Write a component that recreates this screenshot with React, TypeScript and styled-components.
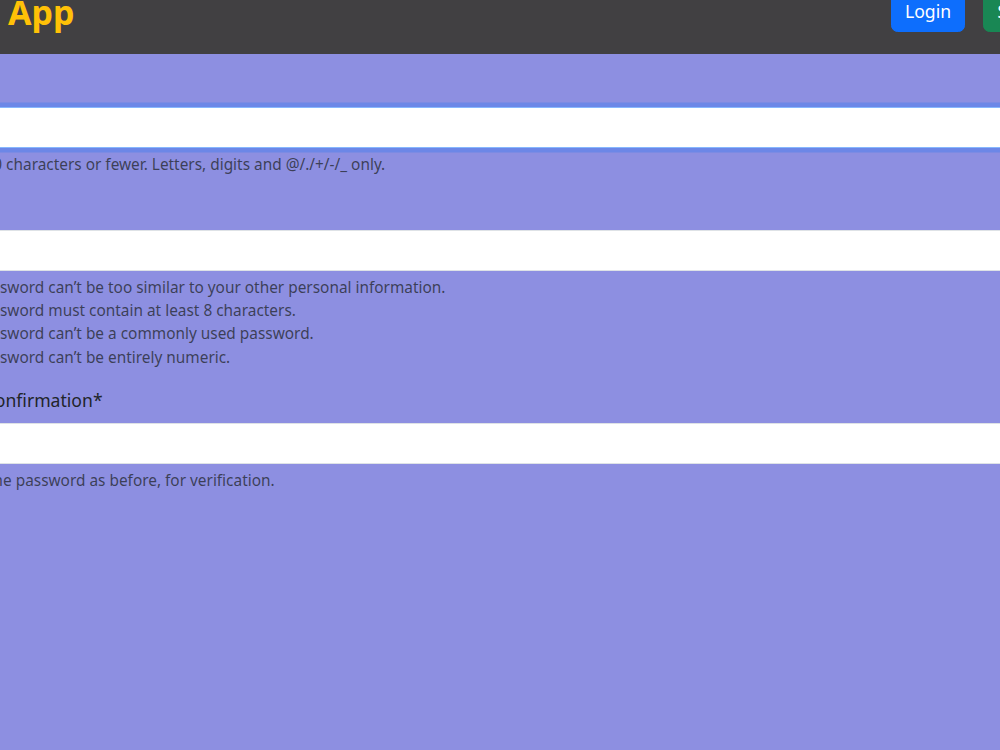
import React from 'react';
import styled, { createGlobalStyle, css } from 'styled-components';

const GlobalStyle = createGlobalStyle`
    html, body {
        margin: 0;
        padding: 0;
        overflow: hidden;
        background: #8d8fe1;
    }
    body {
        font-family: "Noto Sans", "DejaVu Sans", sans-serif;
        font-size: 17.6px;
        line-height: 1.5;
        color: #212529;
    }
`;

// the page is shown scrolled a little to the right and down
const Page = styled.div`
    width: 1197px;
    min-height: 800px;
    margin: -21px 0 0 -108px;
    background: #8d8fe1;
`;

const Navbar = styled.header`
    display: flex;
    align-items: flex-start;
    box-sizing: border-box;
    height: 75px;
    padding: 11px 13.2px 0 116px;
    background: #414042;
`;

const Brand = styled.a`
    font-size: 34px;
    font-weight: 700;
    line-height: 44px;
    color: #ffc107;
    text-decoration: none;
`;

const Actions = styled.div`
    display: flex;
    gap: 18px;
    margin-left: auto;
`;

const NavButton = styled.button<{ $variant: 'primary' | 'success' }>`
    font-family: inherit;
    font-size: 17.6px;
    line-height: 1.5;
    padding: 6.6px 13.2px 7.2px;
    border: 1.1px solid;
    border-radius: 6.6px;
    color: #fff;
    ${({ $variant }) =>
        $variant === 'primary'
            ? css`
                  background: #0d6efd;
                  border-color: #0d6efd;
              `
            : css`
                  background: #198754;
                  border-color: #198754;
              `}
`;

const Main = styled.main`
    padding: 17.6px 13.2px 0 10.2px;
`;

const Field = styled.div`
    margin-bottom: 18.6px;
`;

const Label = styled.label`
    display: block;
    margin-bottom: 8.8px;
    font-size: 17.6px;
    line-height: 26.4px;
`;

const Input = styled.input<{ $focused?: boolean }>`
    display: block;
    box-sizing: border-box;
    width: 100%;
    padding: 6.6px 13.2px;
    font-family: inherit;
    font-size: 17.6px;
    line-height: 1.5;
    color: #212529;
    background: #fff;
    border: 1.1px solid #dee2e6;
    border-radius: 6.6px;
    outline: 0;
    ${({ $focused }) =>
        $focused &&
        css`
            border-color: #86b7fe;
            box-shadow: 0 0 0 4.4px rgba(13, 110, 253, 0.25);
        `}
`;

const HelpText = styled.div`
    margin-top: 4.4px;
    font-size: 15.4px;
    line-height: 1.5;
    color: rgba(33, 37, 41, 0.75);
`;

const HelpList = styled.ul`
    margin: 0;
    padding-left: 35.2px;
    line-height: 23.3px;
`;

const passwordRules = [
    'Your password can’t be too similar to your other personal information.',
    'Your password must contain at least 8 characters.',
    'Your password can’t be a commonly used password.',
    'Your password can’t be entirely numeric.',
];

const App: React.FC = (): JSX.Element => {
    return (
        <Page>
            <GlobalStyle />
            <Navbar>
                <Brand href="#">App</Brand>
                <Actions>
                    <NavButton $variant="primary">Login</NavButton>
                    <NavButton $variant="success">Sign Up</NavButton>
                </Actions>
            </Navbar>
            <Main>
                <form onSubmit={(event) => event.preventDefault()}>
                    <Field>
                        <Label htmlFor="id_username">Username*</Label>
                        <Input id="id_username" type="text" $focused />
                        <HelpText>
                            Required. 150 characters or fewer. Letters, digits
                            and @/./+/-/_ only.
                        </HelpText>
                    </Field>
                    <Field>
                        <Label htmlFor="id_password1">Password*</Label>
                        <Input id="id_password1" type="password" />
                        <HelpText>
                            <HelpList>
                                {passwordRules.map((rule) => (
                                    <li key={rule}>{rule}</li>
                                ))}
                            </HelpList>
                        </HelpText>
                    </Field>
                    <Field>
                        <Label htmlFor="id_password2">
                            Password confirmation*
                        </Label>
                        <Input id="id_password2" type="password" />
                        <HelpText>
                            Enter the same password as before, for
                            verification.
                        </HelpText>
                    </Field>
                </form>
            </Main>
        </Page>
    );
};

export default App;
